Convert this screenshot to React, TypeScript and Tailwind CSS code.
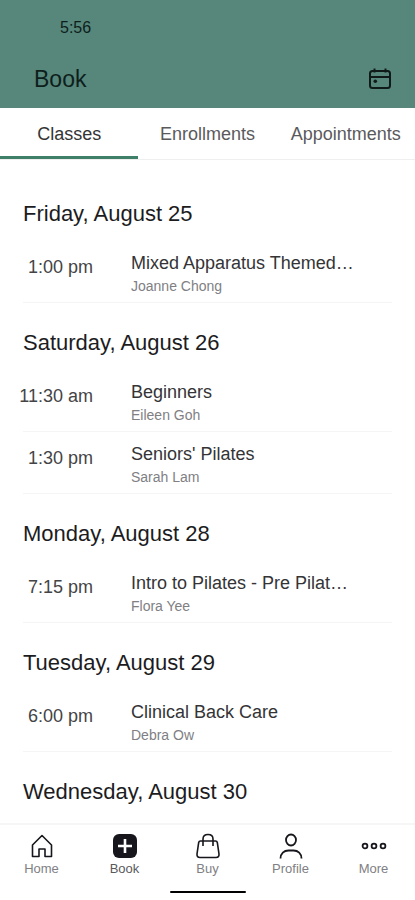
import { useState } from "react";

type ClassItem = { time: string; title: string; teacher: string };
type Day = { date: string; items: ClassItem[] };

const tabs = ["Classes", "Enrollments", "Appointments"];

const schedule: Day[] = [
  {
    date: "Friday, August 25",
    items: [{ time: "1:00 pm", title: "Mixed Apparatus Themed…", teacher: "Joanne Chong" }]
  },
  {
    date: "Saturday, August 26",
    items: [
      { time: "11:30 am", title: "Beginners", teacher: "Eileen Goh" },
      { time: "1:30 pm", title: "Seniors' Pilates", teacher: "Sarah Lam" }
    ]
  },
  {
    date: "Monday, August 28",
    items: [{ time: "7:15 pm", title: "Intro to Pilates - Pre Pilat…", teacher: "Flora Yee" }]
  },
  {
    date: "Tuesday, August 29",
    items: [{ time: "6:00 pm", title: "Clinical Back Care", teacher: "Debra Ow" }]
  },
  { date: "Wednesday, August 30", items: [] }
];

function CalendarIcon() {
  return (
    <svg width="24" height="24" viewBox="0 0 24 24" fill="none" stroke="currentColor" strokeWidth="2" aria-hidden="true">
      <rect x="2" y="4" width="20" height="17" rx="2.5" />
      <path d="M2 10h20M6.5 1.5v4M17.5 1.5v4" />
      <circle cx="7.3" cy="14.3" r="1.8" fill="currentColor" stroke="none" />
    </svg>
  );
}

function HomeIcon() {
  return (
    <svg width="26" height="26" viewBox="0 0 26 26" fill="none" stroke="currentColor" strokeWidth="1.6" aria-hidden="true">
      <path d="M3.5 12 13 2.5 22.500 12v11.500h-6.500v-7.500h-6v7.500H3.500z" strokeLinejoin="round" />
    </svg>
  );
}

function BookIcon() {
  return (
    <svg width="26" height="26" viewBox="0 0 26 26" aria-hidden="true">
      <rect x="1" y="1" width="24" height="24" rx="6" fill="currentColor" />
      <path d="M13 6v14M6 13h14" stroke="white" strokeWidth="2.6" />
    </svg>
  );
}

function BagIcon() {
  return (
    <svg width="26" height="26" viewBox="0 0 26 26" fill="none" stroke="currentColor" strokeWidth="1.6" aria-hidden="true">
      <path d="M5.500 8h15q1.500 0 1.800 1.500L24 21q.3 3.500-3 3.500H5q-3.300 0-3-3.500L3.700 9.500Q4 8 5.500 8z" />
      <path d="M8 13V6q0-4.500 5-4.500T18 6v7" />
    </svg>
  );
}

function ProfileIcon() {
  return (
    <svg width="26" height="26" viewBox="0 0 26 26" fill="none" stroke="currentColor" strokeWidth="1.8" aria-hidden="true">
      <ellipse cx="13" cy="7" rx="5" ry="5.5" />
      <path d="M2.500 25.500c0-5 3.500-8 8-8h5c4.500 0 8 3 8 8" />
    </svg>
  );
}

function MoreIcon() {
  return (
    <svg width="26" height="26" viewBox="0 0 26 26" fill="none" stroke="currentColor" strokeWidth="1.8" aria-hidden="true">
      <circle cx="4" cy="13" r="2.4" />
      <circle cx="13" cy="13" r="2.4" />
      <circle cx="22" cy="13" r="2.4" />
    </svg>
  );
}

const navItems = [
  { label: "Home", Icon: HomeIcon },
  { label: "Book", Icon: BookIcon },
  { label: "Buy", Icon: BagIcon },
  { label: "Profile", Icon: ProfileIcon },
  { label: "More", Icon: MoreIcon }
];

export default function App() {
  const [activeTab, setActiveTab] = useState("Classes");

  return (
    <div className="flex h-screen flex-col bg-white font-['Liberation_Sans',Arial,sans-serif] text-[#1c1c1e]">
      <header className="shrink-0 bg-[#57867b] pb-[13px] text-[#0d1f1b]">
        <p className="pt-4 pl-15 text-base leading-6">5:56</p>
        <div className="flex items-center justify-between pt-[23px] pr-[23px] pl-[34px]">
          <h1 className="text-[23px] leading-8">Book</h1>
          <button aria-label="Open calendar" className="text-[#101a18]">
            <CalendarIcon />
          </button>
        </div>
      </header>

      <div role="tablist" className="grid shrink-0 grid-cols-3 border-b border-[#efefef]">
        {tabs.map((tab) => (
          <button
            key={tab}
            role="tab"
            aria-selected={activeTab === tab}
            onClick={() => setActiveTab(tab)}
            className={`border-b-3 pt-[14px] pb-[10px] text-lg leading-6 ${
              activeTab === tab ? "border-[#3f8069] text-[#343436]" : "border-transparent text-[#5a5a5c]"
            }`}
          >
            {tab}
          </button>
        ))}
      </div>

      <main className="min-h-0 flex-1 overflow-y-auto px-[23px] pt-[14px]">
        {schedule.map((day) => (
          <section key={day.date}>
            <h2 className="pt-6 pb-[11px] text-[22px] leading-8">{day.date}</h2>
            <ul>
              {day.items.map((item) => (
                <li key={item.time} className="flex border-b border-[#f5f5f5] pt-[10px] pb-[5px]">
                  <time className="-ml-3 w-[82px] shrink-0 pt-1 text-right text-lg leading-6 whitespace-nowrap text-[#444446]">
                    {item.time}
                  </time>
                  <div className="min-w-0 pl-[38px]">
                    <h3 className="truncate text-lg leading-6 text-[#343436]">{item.title}</h3>
                    <p className="truncate text-sm leading-[22px] text-[#808084]">{item.teacher}</p>
                  </div>
                </li>
              ))}
            </ul>
          </section>
        ))}
      </main>

      <nav className="shrink-0 border-t-2 border-[#f6f6f6] pt-2 pb-[7px]">
        <div className="grid grid-cols-5">
          {navItems.map(({ label, Icon }) => (
            <a key={label} href={`#${label.toLowerCase()}`} className="flex flex-col items-center text-[#16161c]">
              <Icon />
              <span className={`text-[13px] leading-5 ${label === "Book" ? "text-[#5a5a5c]" : "text-[#808084]"}`}>
                {label}
              </span>
            </a>
          ))}
        </div>
        <div className="mx-auto mt-3 h-[2px] w-19 rounded-full bg-black" />
      </nav>
    </div>
  );
}
